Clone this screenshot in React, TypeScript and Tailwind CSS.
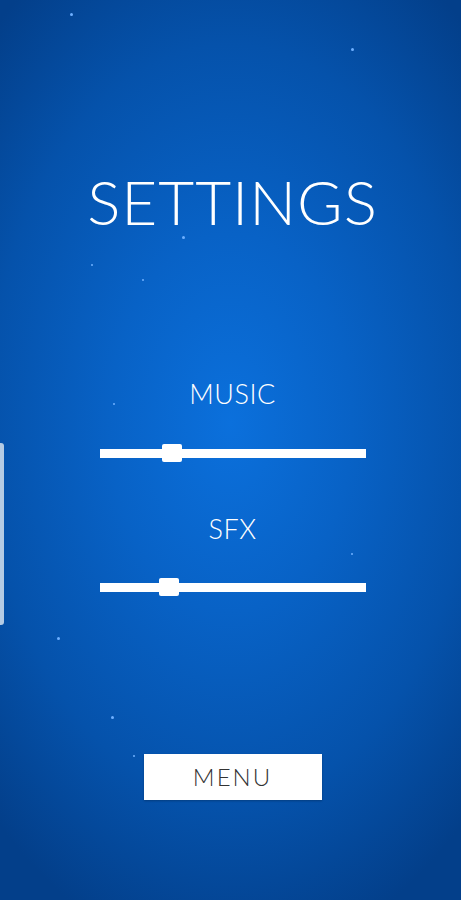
import React from "react";

const STARS: [number, number, number][] = [
  [70, 13, 3],
  [351, 48, 3],
  [182, 236, 3],
  [91, 264, 2],
  [142, 279, 2],
  [113, 403, 2],
  [351, 553, 2],
  [57, 637, 3],
  [111, 716, 3],
  [133, 755, 2],
];

function Slider({ value }: { value: number }) {
  return (
    <div className="relative w-[266px] h-[20px] flex items-center">
      <div className="w-full h-[9px] bg-white" />
      <div className="absolute top-[1px] w-[20px] h-[18px] rounded-[2px] bg-white" style={{ left: `${value}px` }} />
    </div>
  );
}

export default function App() {
  return (
    <div
      className="relative w-[461px] h-[900px] overflow-hidden flex flex-col items-center pl-[4px] text-white"
      style={{
        fontFamily: "Lato, 'Open Sans', sans-serif",
        background: "radial-gradient(ellipse 75% 60% at 50% 47%, #0b70dc 0%, #0862c6 35%, #0552ab 70%, #033f8a 100%)",
      }}
    >
      {STARS.map(([x, y, s], i) => (
        <span
          key={i}
          className="absolute rounded-full bg-[#6fb0ff]"
          style={{ left: x, top: y, width: s, height: s }}
        />
      ))}

      <div className="absolute left-0 top-[443px] w-[4px] h-[182px] rounded-r-[3px] bg-[#b4cbe4]" />

      <h1 className="mt-[170px] text-[62px] leading-none font-light tracking-[1px]">SETTINGS</h1>

      <div className="mt-[148px] text-[27px] leading-none font-light tracking-[0.5px]">MUSIC</div>
      <div className="mt-[36px]">
        <Slider value={62} />
      </div>

      <div className="mt-[52px] text-[27px] leading-none font-light tracking-[0.5px]">SFX</div>
      <div className="mt-[35px]">
        <Slider value={59} />
      </div>

      <button className="mt-[157px] w-[178px] h-[46px] bg-white text-[#333] text-[24px] font-light tracking-[2px] shadow-[0_1px_2px_rgba(0,0,0,0.25)]">
        MENU
      </button>
    </div>
  );
}
